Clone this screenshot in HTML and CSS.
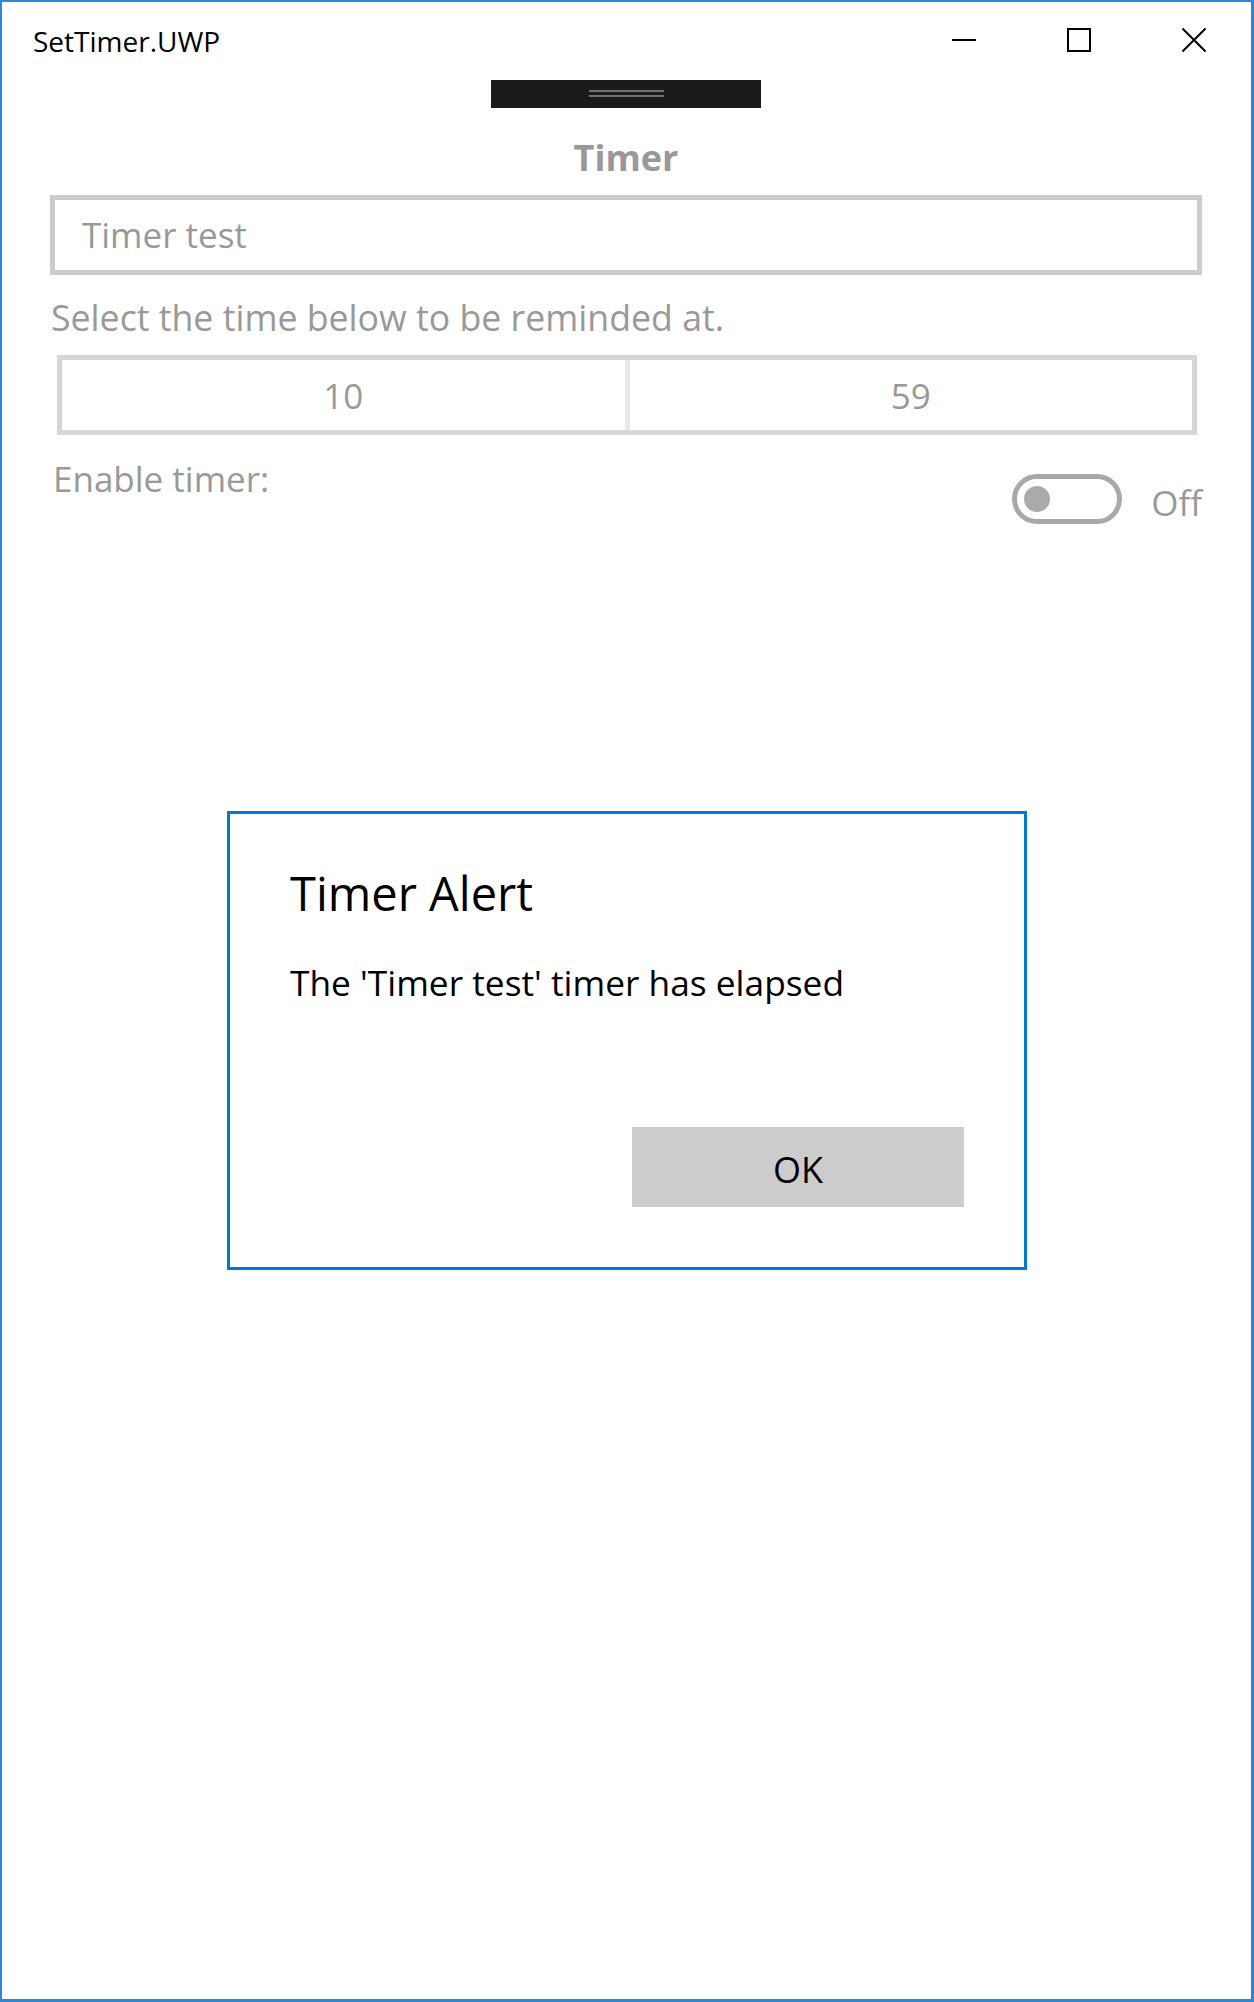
FILE: index.html
```html
<!DOCTYPE html>
<html lang="en">
<head>
<meta charset="utf-8">
<title>SetTimer.UWP</title>
<link rel="stylesheet" href="styles.css">
</head>
<body>
<div class="window">
  <header class="titlebar">
    <div class="app-title">SetTimer.UWP</div>
    <div class="caption-buttons">
      <div class="caption-btn">
        <svg width="24" height="24" viewBox="0 0 24 24"><line x1="0" y1="12" x2="24" y2="12" stroke="#000" stroke-width="2"/></svg>
      </div>
      <div class="caption-btn">
        <svg width="24" height="24" viewBox="0 0 24 24"><rect x="1" y="1" width="22" height="22" fill="none" stroke="#000" stroke-width="2"/></svg>
      </div>
      <div class="caption-btn">
        <svg width="24" height="24" viewBox="0 0 24 24"><path d="M0.5 0.5 L23.5 23.5 M23.5 0.5 L0.5 23.5" stroke="#000" stroke-width="2" fill="none"/></svg>
      </div>
    </div>
  </header>

  <main class="content">
    <div class="drag-handle"><span class="grip"></span><span class="grip"></span></div>
    <h1 class="page-title">Timer</h1>
    <div class="entry"><span class="placeholder">Timer test</span></div>
    <p class="label select-label">Select the time below to be reminded at.</p>
    <div class="time-picker">
      <div class="time-part">10</div>
      <div class="time-divider"></div>
      <div class="time-part">59</div>
    </div>
    <div class="toggle-row">
      <p class="label">Enable timer:</p>
      <div class="toggle-group">
        <div class="toggle"><span class="knob"></span></div>
        <span class="toggle-state">Off</span>
      </div>
    </div>
  </main>

  <div class="dialog">
    <h2 class="dialog-title">Timer Alert</h2>
    <p class="dialog-body">The 'Timer test' timer has elapsed</p>
    <div class="dialog-actions">
      <button class="dialog-btn">OK</button>
    </div>
  </div>
</div>
</body>
</html>
```

FILE: styles.css
```css
* { box-sizing: border-box; }

html, body {
  margin: 0;
  padding: 0;
  background: #fff;
}

body {
  font-family: "Open Sans", "Noto Sans", sans-serif;
}

.window {
  position: relative;
  width: 1254px;
  height: 2002px;
  border: 2px solid #2b88d8;
  border-right-width: 3px;
  border-bottom-width: 3px;
  background: #fff;
  overflow: hidden;
}

.titlebar {
  display: flex;
  justify-content: space-between;
  height: 78px;
}

.app-title {
  padding: 25px 0 0 31px;
  font-size: 28px;
  line-height: 28px;
  color: #000;
}

.caption-buttons {
  display: flex;
}

.caption-btn {
  width: 115px;
  height: 78px;
  display: flex;
  justify-content: center;
  padding-top: 26px;
}

.caption-btn svg { display: block; }

.content {
  display: flex;
  flex-direction: column;
  padding: 0 49px 0 48px;
}

.drag-handle {
  align-self: center;
  width: 270px;
  height: 28px;
  background: #1b1b1b;
  display: flex;
  flex-direction: column;
  align-items: center;
  padding-top: 10px;
  gap: 3px;
}

.grip {
  display: block;
  width: 75px;
  height: 2px;
  background: #707070;
}

.page-title {
  margin: 32px 0 0;
  text-align: center;
  font-size: 36px;
  line-height: 36px;
  font-weight: 700;
  color: #999;
}

.entry {
  margin-top: 19px;
  height: 80px;
  border: 5px solid #cccccc;
  display: flex;
  align-items: center;
  padding: 0 0 2px 27px;
}

.placeholder {
  font-size: 35px;
  line-height: 35px;
  color: #999;
}

.label {
  margin: 0;
  font-size: 35px;
  line-height: 35px;
  color: #999;
}

.select-label {
  margin-top: 24px;
  padding-left: 1px;
  font-size: 35.7px;
  line-height: 36px;
}

.time-picker {
  margin: 20px 5px 0 7px;
  height: 80px;
  border: 5px solid #d6d6d6;
  display: flex;
}

.time-part {
  flex: 1;
  display: flex;
  align-items: center;
  justify-content: center;
  font-size: 35px;
  line-height: 35px;
  color: #999;
}

.time-divider {
  width: 5px;
  background: #e8e8e8;
}

.toggle-row {
  margin-top: 26px;
  display: flex;
  justify-content: space-between;
  align-items: flex-start;
  padding-left: 3px;
}

.toggle-group {
  display: flex;
  align-items: center;
  gap: 29px;
  margin-top: 13px;
}

.toggle {
  width: 110px;
  height: 50px;
  border: 5px solid #a8a8a8;
  border-radius: 25px;
  display: flex;
  align-items: center;
  padding-left: 7px;
}

.knob {
  width: 26px;
  height: 26px;
  border-radius: 50%;
  background: #aaaaaa;
}

.toggle-state {
  font-size: 35px;
  line-height: 35px;
  color: #999;
  padding-top: 6px;
}

.dialog {
  position: absolute;
  left: 225px;
  top: 809px;
  width: 800px;
  height: 459px;
  border: 3px solid #0078d7;
  background: #fff;
  padding: 56px 60px 60px 60px;
  display: flex;
  flex-direction: column;
}

.dialog-title {
  margin: 0;
  font-size: 47px;
  line-height: 47px;
  font-weight: 400;
  color: #000;
}

.dialog-body {
  margin: 48px 0 0;
  font-size: 35.3px;
  line-height: 35px;
  color: #000;
}

.dialog-actions {
  margin-top: auto;
  display: flex;
  justify-content: flex-end;
}

.dialog-btn {
  width: 332px;
  height: 80px;
  border: 0;
  background: #cccccc;
  font-family: "Open Sans", "Noto Sans", sans-serif;
  font-size: 36px;
  line-height: 36px;
  color: #000;
  padding: 6px 0 0;
}
```
